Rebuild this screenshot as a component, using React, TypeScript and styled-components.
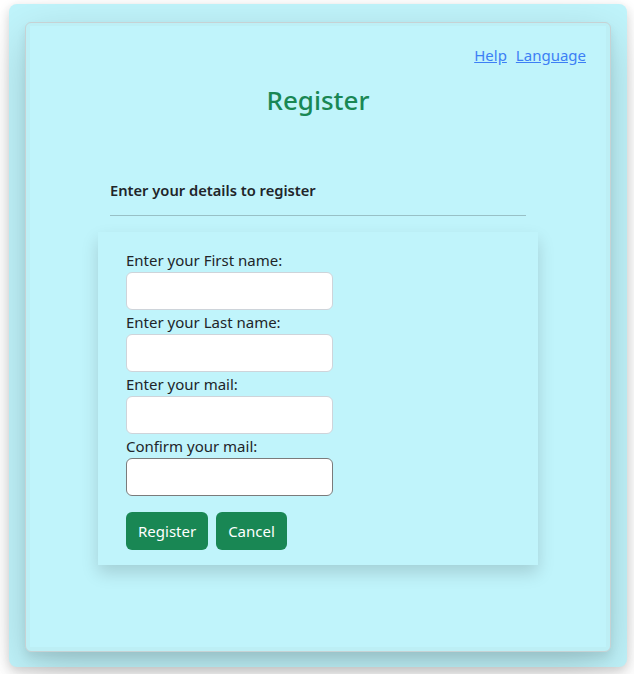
import React from "react";
import styled, { createGlobalStyle } from "styled-components";

const Global = createGlobalStyle`
  html, body { margin: 0; padding: 0; background: #ffffff; }
  body { font-family: "Noto Sans", "Open Sans", sans-serif; color: #212529; }
  * { box-sizing: border-box; }
`;

const Page = styled.div`
  padding: 4px 7px 7px 9px;
`;

const Outer = styled.div`
  height: 663px;
  border-radius: 8px;
  background: #c0f4fb;
  box-shadow: 0 4px 12px rgba(0, 0, 0, 0.18);
  padding: 18px 16px 16px 16px;
`;

const Card = styled.div`
  height: 630px;
  border: 1px solid #c6d2d4;
  border-radius: 6px;
  background: #bdeff5;
  padding: 3px 4px 4px 4px;
  box-shadow: 0 16px 48px rgba(0, 0, 0, 0.175), 0 6px 10px rgba(0, 0, 0, 0.08);
`;

const Content = styled.div`
  height: 100%;
  background: #c0f4fb;
  padding: 17px 20px 0 20px;
  display: flex;
  flex-direction: column;
`;

const TopNav = styled.nav`
  display: flex;
  justify-content: flex-end;
  gap: 9px;
  line-height: 24px;
`;

const NavLink = styled.a`
  color: #3d7ff5;
  font-size: 15px;
  text-decoration: underline;
`;

const Title = styled.h1`
  margin: 16px 0 0 0;
  text-align: center;
  color: #198754;
  font-size: 26px;
  font-weight: 500;
  line-height: 34px;
`;

const Section = styled.section`
  margin: 62px 60px 0 60px;
  display: flex;
  flex-direction: column;
`;

const Subtitle = styled.h5`
  margin: 0;
  font-size: 14.7px;
  font-weight: 600;
  line-height: 22px;
  color: #212529;
`;

const Rule = styled.hr`
  margin: 14px 0 16px 0;
  border: 0;
  border-top: 1px solid #98c0c6;
`;

const FormCard = styled.form`
  margin: 0 -12px;
  padding: 16px 28px 15px 28px;
  background: #c0f4fb;
  box-shadow: 0 8px 16px rgba(0, 0, 0, 0.15);
  display: flex;
  flex-direction: column;
`;

const Label = styled.label`
  display: block;
  font-size: 15px;
  line-height: 24px;
  color: #212529;
`;

const Input = styled.input<{ $strong?: boolean }>`
  display: block;
  width: 207px;
  height: 38px;
  border-radius: 6px;
  border: 1px solid ${(p) => (p.$strong ? "#7b7b7b" : "#ced4da")};
  background: #ffffff;
  outline: none;
`;

const Actions = styled.div`
  display: flex;
  gap: 8px;
  margin-top: 16px;
`;

const Button = styled.button`
  height: 38px;
  padding: 0 12px;
  border: 0;
  border-radius: 6px;
  background: #198754;
  color: #ffffff;
  font-family: inherit;
  font-size: 15px;
`;

const fields = [
  "Enter your First name:",
  "Enter your Last name:",
  "Enter your mail:",
  "Confirm your mail:",
];

export default function App() {
  return (
    <>
      <Global />
      <Page>
        <Outer>
          <Card>
            <Content>
              <TopNav>
                <NavLink href="#">Help</NavLink>
                <NavLink href="#">Language</NavLink>
              </TopNav>
              <Title>Register</Title>
              <Section>
                <Subtitle>Enter your details to register</Subtitle>
                <Rule />
                <FormCard onSubmit={(e) => e.preventDefault()}>
                  {fields.map((f, i) => (
                    <div key={f}>
                      <Label>{f}</Label>
                      <Input $strong={i === fields.length - 1} />
                    </div>
                  ))}
                  <Actions>
                    <Button type="submit">Register</Button>
                    <Button type="button">Cancel</Button>
                  </Actions>
                </FormCard>
              </Section>
            </Content>
          </Card>
        </Outer>
      </Page>
    </>
  );
}
